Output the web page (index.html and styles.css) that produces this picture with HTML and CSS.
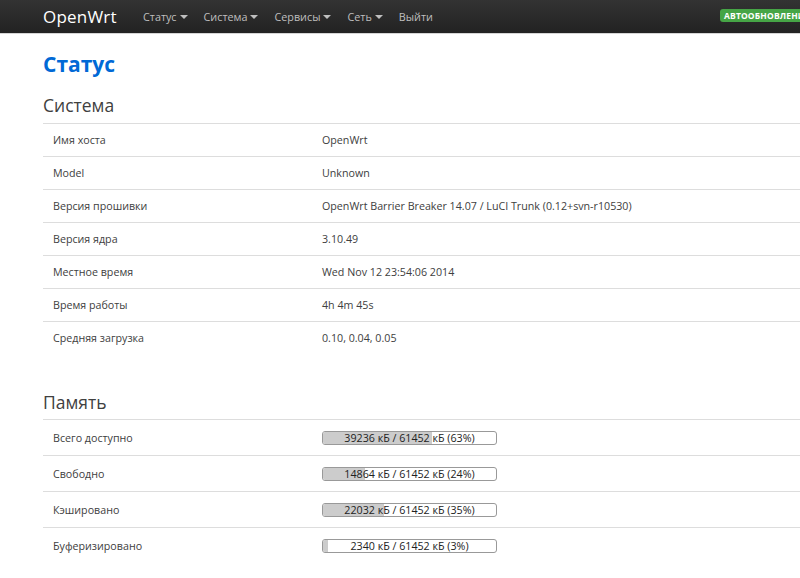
FILE: index.html
```html
<!DOCTYPE html>
<html>
<head>
<meta charset="utf-8">
<link rel="stylesheet" href="styles.css">
</head>
<body>
<header class="topbar">
  <div class="topbar-inner">
    <a class="brand">OpenWrt</a>
    <ul class="nav">
      <li>Статус <span class="caret"></span></li>
      <li>Система <span class="caret"></span></li>
      <li>Сервисы <span class="caret"></span></li>
      <li>Сеть <span class="caret"></span></li>
      <li>Выйти</li>
    </ul>
    <span class="badge">Автообновление вкл.</span>
  </div>
</header>
<main class="container">
  <h1 class="page-title">Статус</h1>

  <section class="cbi-section">
    <h2>Система</h2>
    <div class="table">
      <div class="row"><div class="lbl">Имя хоста</div><div class="val">OpenWrt</div></div>
      <div class="row"><div class="lbl">Model</div><div class="val">Unknown</div></div>
      <div class="row"><div class="lbl">Версия прошивки</div><div class="val">OpenWrt Barrier Breaker 14.07 / LuCI Trunk (0.12+svn-r10530)</div></div>
      <div class="row"><div class="lbl">Версия ядра</div><div class="val">3.10.49</div></div>
      <div class="row"><div class="lbl">Местное время</div><div class="val">Wed Nov 12 23:54:06 2014</div></div>
      <div class="row"><div class="lbl">Время работы</div><div class="val">4h 4m 45s</div></div>
      <div class="row"><div class="lbl">Средняя загрузка</div><div class="val">0.10, 0.04, 0.05</div></div>
    </div>
  </section>

  <section class="cbi-section mem">
    <h2>Память</h2>
    <div class="table">
      <div class="row tall"><div class="lbl">Всего доступно</div><div class="val"><div class="bar"><div class="fill" style="width:63%"></div><span>39236 кБ / 61452 кБ (63%)</span></div></div></div>
      <div class="row tall"><div class="lbl">Свободно</div><div class="val"><div class="bar"><div class="fill" style="width:24%"></div><span>14864 кБ / 61452 кБ (24%)</span></div></div></div>
      <div class="row tall"><div class="lbl">Кэшировано</div><div class="val"><div class="bar"><div class="fill" style="width:35%"></div><span>22032 кБ / 61452 кБ (35%)</span></div></div></div>
      <div class="row tall"><div class="lbl">Буферизировано</div><div class="val"><div class="bar"><div class="fill" style="width:3%"></div><span>2340 кБ / 61452 кБ (3%)</span></div></div></div>
    </div>
  </section>
</main>
</body>
</html>
```
FILE: styles.css
```css
html, body {
  margin: 0;
  padding: 0;
  overflow: hidden;
}
body {
  font-family: "Open Sans", "DejaVu Sans", sans-serif;
  font-size: 10.7px;
  color: #404040;
  background: #fff;
  width: 800px;
  height: 578px;
}
.topbar {
  position: relative;
  height: 33px;
  background: linear-gradient(to bottom, #333333, #222222);
  border-bottom: 1px solid #d5d5d5;
  overflow: hidden;
}
.topbar-inner {
  display: flex;
  align-items: center;
  height: 33px;
  padding-left: 43px;
  width: 1000px;
}
.brand {
  color: #ffffff;
  font-size: 17px;
  width: 100px;
  letter-spacing: 0.2px;
}
.nav {
  list-style: none;
  margin: 0;
  padding: 0;
  display: flex;
  gap: 16px;
  color: #bfbfbf;
  font-size: 10.8px;
}
.nav li {
  display: flex;
  align-items: center;
  gap: 3px;
}
.caret {
  display: inline-block;
  width: 0;
  height: 0;
  border-left: 4px solid transparent;
  border-right: 4px solid transparent;
  border-top: 4px solid #bfbfbf;
  margin-top: 1px;
}
.badge {
  position: absolute;
  left: 720px;
  top: 9px;
  background: #46a546;
  color: #fff;
  font-size: 8.5px;
  font-weight: bold;
  text-transform: uppercase;
  letter-spacing: 0.15px;
  padding: 1px 4px 1px 4px;
  border-radius: 3px;
  white-space: nowrap;
  line-height: 11px;
}
.container {
  margin-left: 43px;
  width: 940px;
}
.page-title {
  margin: 17px 0 0 0;
  font-size: 21px;
  line-height: 26px;
  color: #0069d6;
  font-weight: bold;
}
.cbi-section h2 {
  margin: 17px 0 0 0;
  font-size: 17.5px;
  font-weight: normal;
  line-height: 22px;
  color: #404040;
  padding-bottom: 7px;
}
.cbi-section.mem {
  margin-top: 37px;
}
.cbi-section.mem h2 {
  margin-top: 11px;
  padding-bottom: 6px;
}
.table {
  display: flex;
  flex-direction: column;
}
.row {
  display: flex;
  align-items: center;
  height: 33px;
  border-top: 1px solid #dddddd;
  box-sizing: border-box;
}
.row.tall {
  height: 36px;
}
.lbl {
  width: 269px;
  padding-left: 10px;
}
.val {
  flex: 1;
}
.bar {
  position: relative;
  width: 173px;
  height: 12px;
  border: 1px solid #999999;
  border-radius: 3px;
  background: #fff;
  overflow: hidden;
}
.fill {
  height: 100%;
  background: #cccccc;
}
.bar span {
  position: absolute;
  left: 0;
  right: 0;
  top: 0;
  text-align: center;
  line-height: 12px;
  font-size: 10.7px;
  color: #222;
}
```
